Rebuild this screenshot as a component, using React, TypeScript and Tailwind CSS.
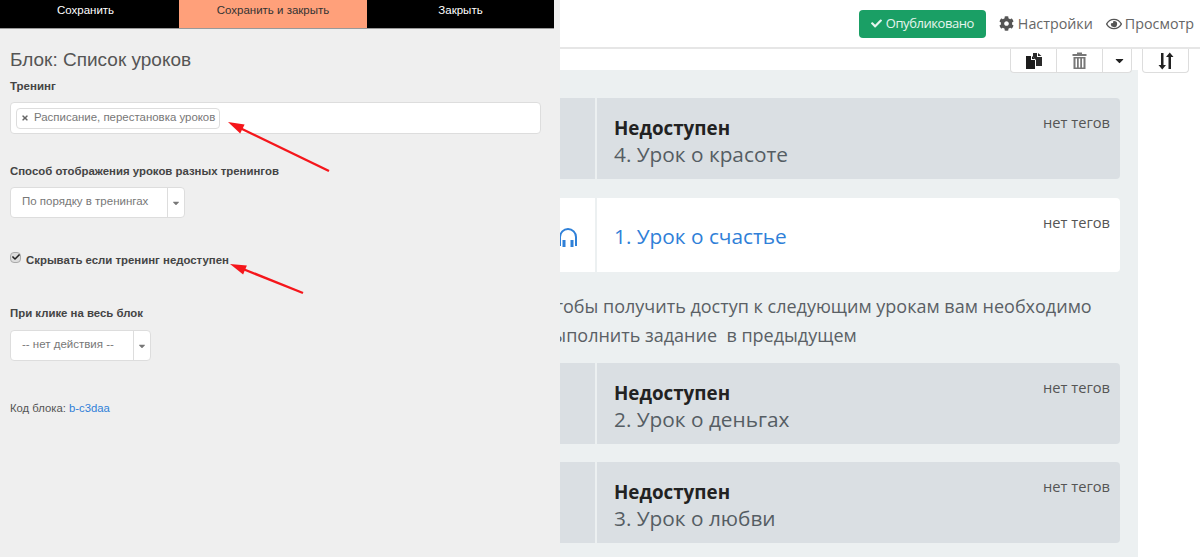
import { FaCheck, FaCog, FaRegEye, FaCaretDown, FaTimes } from 'react-icons/fa'

function Headphones() {
  return (
    <svg width="18" height="19" viewBox="0 0 18 19" fill="none" className="text-[#2f80d8]">
      <path d="M1 18 V9 a8 8 0 0 1 16 0 V18" stroke="currentColor" strokeWidth="2" />
      <rect x="3.5" y="12" width="3" height="7" fill="currentColor" />
      <rect x="11.5" y="12" width="3" height="7" fill="currentColor" />
    </svg>
  )
}

function FilesIcon() {
  return (
    <svg width="17" height="17" viewBox="0 0 17 17">
      <path d="M8 1 L12 1 L12 5 L17 5 L17 14 L11 14 L11 8 L8 5 Z" fill="#2a2a2a" />
      <path d="M13 1 L16.5 4 L13 4 Z" fill="#2a2a2a" />
      <path d="M1 4 L6 4 L6 8 L10 8 L10 17 L1 17 Z" fill="#1c1c1c" />
      <path d="M7 4 L10 7 L7 7 Z" fill="#1c1c1c" />
    </svg>
  )
}

function TrashIcon() {
  return (
    <svg width="15" height="17" viewBox="0 0 15 17" fill="#777">
      <path d="M5 0.5 H10 V2 H14.5 V4 H0.5 V2 H5 Z" />
      <path d="M1.5 5 H13.5 V17 H1.5 Z M3.5 6.5 V15.5 H5 V6.5 Z M6.75 6.5 V15.5 H8.25 V6.5 Z M10 6.5 V15.5 H11.5 V6.5 Z" fillRule="evenodd" />
    </svg>
  )
}

function SortIcon() {
  return (
    <svg width="16" height="18" viewBox="0 0 16 18" fill="#222">
      <path d="M3 1 H5.5 V13 H8 L4.25 17.5 L0.5 13 H3 Z" />
      <path d="M10.5 17 H13 V5 H15.5 L11.75 0.5 L8 5 H10.5 Z" />
    </svg>
  )
}

function Lesson({ title, locked = true, h = 'h-[81px]' }: { title: string, locked?: boolean, h?: string }) {
  return (
    <div className={`flex ${h} w-[640px] rounded ${locked ? 'bg-[#dadfe3]' : 'bg-white'}`}>
      <div className="w-[117px] shrink-0 flex items-center justify-end pr-[18px] pt-[4px] border-r-2 border-[#ecf0f1]">
        {!locked && <Headphones />}
      </div>
      <div className={`flex-1 pl-[17px] flex flex-col justify-center ${locked ? 'pt-[5px]' : 'pt-[2px]'}`}>
        {locked && <div className="font-bold text-[18.8px] leading-[26px] text-[#222]">Недоступен</div>}
        <div className={`text-[20.8px] leading-[27px] ${locked ? 'text-[#555d63]' : 'text-[#2f80d8]'}`}>{title}</div>
      </div>
      <div className="pr-[10px] pt-[15px] text-[14.7px] leading-[18px] text-[#555]">нет тегов</div>
    </div>
  )
}

function SelectBox({ label, w }: { label: string, w: string }) {
  return (
    <div className={`flex h-[31px] ${w} bg-white border border-[#ddd] rounded text-[11.5px] text-[#777]`}>
      <div className="flex-1 pl-[11px] pt-[5px]">{label}</div>
      <div className="w-[17px] border-l border-[#ddd] flex items-center justify-center">
        <FaCaretDown size={10} className="text-[#777]" />
      </div>
    </div>
  )
}

export default function App() {
  return (
    <div className="relative w-[1200px] h-[557px] overflow-hidden bg-white font-['Open_Sans',sans-serif]">
      {/* верхняя панель */}
      <header className="h-[49px] bg-white border-b-2 border-[#e6e6e6] flex items-center justify-end pr-[6px] relative z-10">
        <button className="h-7 w-[127px] rounded-sm bg-[#1a9f65] text-[#e6f5ee] text-[13px] flex items-center justify-center gap-1 mr-[13px] tracking-[-0.45px]">
          <FaCheck size={11} />
          Опубликовано
        </button>
        <FaCog size={15} className="text-[#555] mr-1" />
        <span className="text-[14.3px] text-[#666] mr-[13px]">Настройки</span>
        <FaRegEye size={16} className="text-[#555] mr-[3px]" />
        <span className="text-[14.3px] text-[#666]">Просмотр</span>
      </header>

      <div className="flex pl-[480px]">
        <main className="w-[658px] h-[508px] mt-[21px] bg-[#ecf0f1] pt-[28px]">
          <Lesson title="4. Урок о красоте" />
          <div className="mt-[19px]">
            <Lesson title="1. Урок о счастье" locked={false} h="h-[74px]" />
          </div>
          <div className="mt-5 text-[18px] leading-[29px] text-[#5a6065] pl-[62px] w-[640px]">
            Чтобы получить доступ к следующим урокам вам необходимо
            <br />
            выполнить задание&nbsp; в предыдущем
          </div>
          <div className="mt-[13px]">
            <Lesson title="2. Урок о деньгах" />
          </div>
          <div className="mt-[18px]">
            <Lesson title="3. Урок о любви" />
          </div>
        </main>
      </div>

      {/* кнопки блока */}
      <div className="absolute top-[49px] left-[1010px] flex items-start gap-[10px] z-20">
        <div className="flex h-[24px] w-[122px] bg-white border border-t-0 border-[#ddd] rounded-b">
          <div className="w-[46px] flex items-center justify-center border-r border-[#ddd]"><FilesIcon /></div>
          <div className="w-[46px] flex items-center justify-center border-r border-[#ddd]"><TrashIcon /></div>
          <div className="flex-1 flex items-center justify-center pl-1"><FaCaretDown size={13} className="text-[#222]" /></div>
        </div>
        <div className="flex h-[24px] w-[47px] items-center justify-center bg-white border border-t-0 border-[#ddd] rounded-b">
          <SortIcon />
        </div>
      </div>

      {/* панель настроек блока поверх страницы */}
      <aside className="absolute left-0 top-0 z-30 w-[560px] h-[557px] bg-[#efefef] font-['Liberation_Sans',sans-serif] text-[#444]">
        <div className="flex h-[29px] w-[554px] bg-black border-b border-[#999] text-[11.5px] text-center leading-[20px] text-white">
          <div className="w-[179px] pr-2">Сохранить</div>
          <div className="w-[188px] bg-[#ffa07a] text-[#333]">Сохранить и закрыть</div>
          <div className="flex-1">Закрыть</div>
        </div>
        <div className="pl-[10px] pr-[19px]">
          <h2 className="mt-[19px] text-[19px] leading-6 text-[#555]">Блок: Список уроков</h2>
          <div className="mt-[6px] text-[11.5px] leading-4 font-bold">Тренинг</div>
          <div className="mt-[8px] h-[32px] bg-white border border-[#ddd] rounded flex items-center pl-[5px]">
            <div className="h-[21px] flex items-center gap-[5px] border border-[#ddd] rounded-sm pl-[4px] pr-[4px] text-[11.45px] text-[#777]">
              <FaTimes size={8} className="text-[#666]" />
              Расписание, перестановка уроков
            </div>
          </div>
          <div className="mt-[29px] text-[11.4px] leading-4 font-bold">Способ отображения уроков разных тренингов</div>
          <div className="mt-[8px]">
            <SelectBox label="По порядку в тренингах" w="w-[175px]" />
          </div>
          <label className="mt-[34px] flex items-center gap-[5px] text-[11.4px] leading-4 font-bold">
            <span className="w-[11px] h-[11px] -mt-[6px] flex items-center justify-center bg-[#ddd] border border-[#aaa] rounded-sm text-[#222]">
              <FaCheck size={8} />
            </span>
            Скрывать если тренинг недоступен
          </label>
          <div className="mt-[37px] text-[11.4px] leading-4 font-bold">При клике на весь блок</div>
          <div className="mt-[9px]">
            <SelectBox label="-- нет действия --" w="w-[141px]" />
          </div>
          <div className="mt-[39px] text-[11.3px] leading-4 text-[#555]">
            Код блока: <span className="text-[#2f80d8]">b-c3daa</span>
          </div>
        </div>
      </aside>

      {/* стрелки-пометки на скриншоте */}
      <svg className="absolute left-0 top-0 z-40 pointer-events-none" width="560" height="557" fill="none">
        <path d="M329 171 L240 128" stroke="#f5161b" strokeWidth="2.4" />
        <path d="M228 122 L244.6 124.5 L240.2 133.5 Z" fill="#f5161b" />
        <path d="M303 293 L243 269" stroke="#f5161b" strokeWidth="2.4" />
        <path d="M230 264 L246.9 265.4 L243.1 274.6 Z" fill="#f5161b" />
      </svg>
    </div>
  )
}
